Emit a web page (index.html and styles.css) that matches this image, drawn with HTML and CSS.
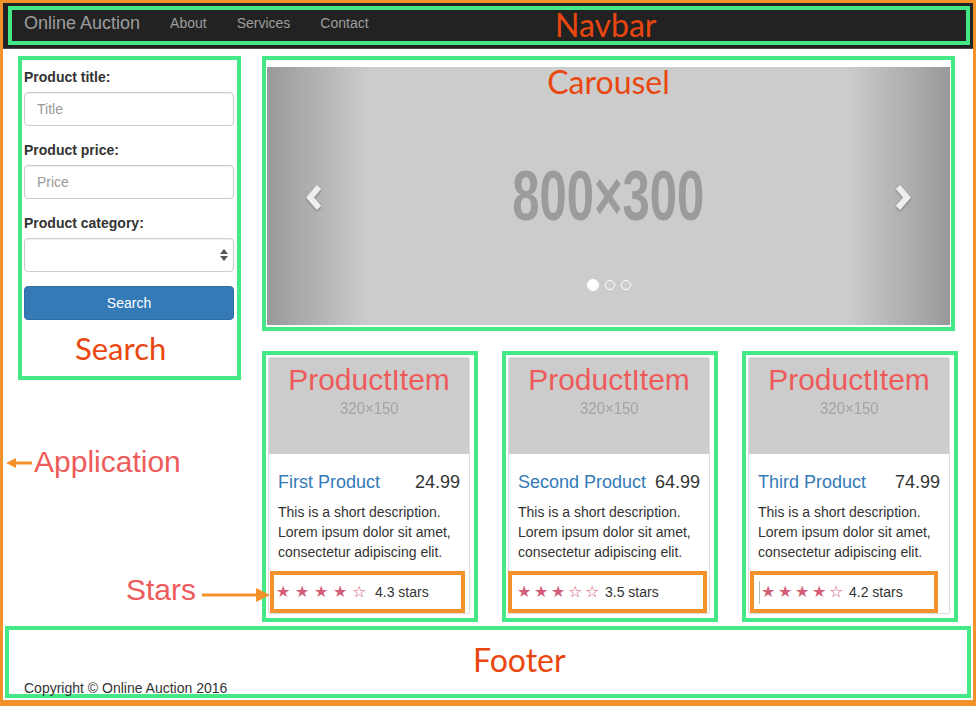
FILE: index.html
```html
<!DOCTYPE html>
<html lang="en">
<head>
<meta charset="utf-8">
<title>Online Auction</title>
<link rel="stylesheet" href="styles.css">
</head>
<body>
<div class="app">
  <nav class="navbar">
    <div class="nav-box">
      <a class="brand">Online Auction</a>
      <a class="nav-link">About</a>
      <a class="nav-link">Services</a>
      <a class="nav-link">Contact</a>
      <span class="tag tag-navbar">Navbar</span>
    </div>
  </nav>

  <main class="main">
    <aside class="search">
      <div class="form-group">
        <label class="field-label">Product title:</label>
        <input class="form-control" type="text" placeholder="Title">
      </div>
      <div class="form-group">
        <label class="field-label">Product price:</label>
        <input class="form-control" type="text" placeholder="Price">
      </div>
      <div class="form-group">
        <label class="field-label">Product category:</label>
        <div class="form-control select">
          <svg class="select-arrows" width="8" height="12" viewBox="0 0 8 12"><polygon points="4,0 8,5 0,5" fill="#555"/><polygon points="0,7 8,7 4,12" fill="#555"/></svg>
        </div>
      </div>
      <button class="btn">Search</button>
      <span class="tag tag-search">Search</span>
    </aside>

    <section class="content">
      <div class="carousel">
        <div class="slide">
          <div class="shade shade-left"></div>
          <div class="shade shade-right"></div>
          <span class="ph-big">800×300</span>
          <svg class="chev chev-left" width="19" height="27" viewBox="0 0 19 27"><polyline points="15,3 6,13.5 15,24" fill="none" stroke="#eeeeee" stroke-width="6"/></svg>
          <svg class="chev chev-right" width="19" height="27" viewBox="0 0 19 27"><polyline points="4,3 13,13.5 4,24" fill="none" stroke="#eeeeee" stroke-width="6"/></svg>
          <div class="indicators">
            <span class="dot dot-active"></span>
            <span class="dot"></span>
            <span class="dot"></span>
          </div>
        </div>
        <span class="tag tag-carousel">Carousel</span>
      </div>

      <div class="products">
        <div class="product">
          <div class="thumb">
            <div class="thumb-img"><span class="ph-sm">320×150</span><span class="item-tag">ProductItem</span></div>
            <div class="caption">
              <div class="title-row"><a class="title">First Product</a><span class="price">24.99</span></div>
              <p class="desc">This is a short description. Lorem ipsum dolor sit amet, consectetur adipiscing elit.</p>
            </div>
            <div class="rating rating-1">
              <span class="stars"><span class="star">★</span><span class="star">★</span><span class="star">★</span><span class="star">★</span><span class="star">☆</span></span>
              <span class="rating-text">4.3 stars</span>
            </div>
          </div>
        </div>
        <div class="product">
          <div class="thumb">
            <div class="thumb-img"><span class="ph-sm">320×150</span><span class="item-tag">ProductItem</span></div>
            <div class="caption">
              <div class="title-row"><a class="title">Second Product</a><span class="price">64.99</span></div>
              <p class="desc">This is a short description. Lorem ipsum dolor sit amet, consectetur adipiscing elit.</p>
            </div>
            <div class="rating rating-2">
              <span class="stars"><span class="star">★</span><span class="star">★</span><span class="star">★</span><span class="star">☆</span><span class="star">☆</span></span>
              <span class="rating-text">3.5 stars</span>
            </div>
          </div>
        </div>
        <div class="product">
          <div class="thumb">
            <div class="thumb-img"><span class="ph-sm">320×150</span><span class="item-tag">ProductItem</span></div>
            <div class="caption">
              <div class="title-row"><a class="title">Third Product</a><span class="price">74.99</span></div>
              <p class="desc">This is a short description. Lorem ipsum dolor sit amet, consectetur adipiscing elit.</p>
            </div>
            <div class="rating rating-3">
              <span class="caret-line"></span>
              <span class="stars"><span class="star">★</span><span class="star">★</span><span class="star">★</span><span class="star">★</span><span class="star">☆</span></span>
              <span class="rating-text">4.2 stars</span>
            </div>
          </div>
        </div>
      </div>
    </section>
  </main>

  <footer class="footer">
    <span class="copyright">Copyright © Online Auction 2016</span>
    <span class="tag tag-footer">Footer</span>
  </footer>

  <svg class="arrow arrow-app" width="26" height="10" viewBox="0 0 26 10"><line x1="8" y1="5" x2="26" y2="5" stroke="#f3922a" stroke-width="3"/><polygon points="0,5 10,0 10,10" fill="#f3922a"/></svg>
  <span class="note note-app">Application</span>
  <span class="note note-stars">Stars</span>
  <svg class="arrow arrow-stars" width="68" height="14" viewBox="0 0 68 14"><line x1="0" y1="7" x2="56" y2="7" stroke="#f3922a" stroke-width="3"/><polygon points="68,7 54,0 54,14" fill="#f3922a"/></svg>
</div>
</body>
</html>
```

FILE: styles.css
```css
body {
  margin: 0;
  font-family: "Liberation Sans", Arial, sans-serif;
  font-size: 14px;
  line-height: 20px;
  color: #333;
  background: #fff;
}

.app {
  position: relative;
  width: 976px;
  height: 706px;
  box-sizing: border-box;
  border: 3px solid #f3922a;
  border-bottom-width: 6px;
  overflow: hidden;
  background: #fff;
}

/* ---------- annotation labels ---------- */
.tag {
  position: absolute;
  font-family: Lato, "Open Sans", sans-serif;
  font-size: 32px;
  line-height: 1;
  color: #e9470f;
  white-space: nowrap;
  z-index: 3;
}

.note {
  position: absolute;
  font-family: "Liberation Sans", Arial, sans-serif;
  font-size: 30px;
  line-height: 1;
  color: #ee5b5b;
  white-space: nowrap;
}

.note-app { left: 31px; top: 444px; }
.note-stars { left: 123px; top: 572px; }

.arrow { position: absolute; }
.arrow-app { left: 3px; top: 455px; }
.arrow-stars { left: 199px; top: 585px; }

/* ---------- navbar ---------- */
.navbar {
  background: #222;
  border-bottom: 1px solid #4a4a4a;
  padding: 3px 3px 3px 5px;
}

.nav-box {
  position: relative;
  box-sizing: border-box;
  height: 39px;
  border: 4px solid #44e887;
  padding: 3px 0 0 12px;
  display: flex;
  align-items: flex-start;
}

.brand {
  font-size: 18px;
  line-height: 20px;
  color: #9d9d9d;
  margin-right: 30px;
}

.nav-link {
  font-size: 14px;
  line-height: 20px;
  color: #9d9d9d;
  margin-right: 30px;
}

.tag-navbar { left: 543px; top: -1px; }

/* ---------- main ---------- */
.main {
  display: flex;
  align-items: flex-start;
  gap: 21px;
  padding: 7px 0 0 15px;
}

/* ---------- search ---------- */
.search {
  position: relative;
  width: 223px;
  height: 324px;
  box-sizing: border-box;
  border: 4px solid #44e887;
  padding: 7px 3px 0 2px;
}

.form-group { margin-bottom: 14px; }

.field-label {
  display: block;
  font-weight: bold;
  margin-bottom: 5px;
}

.form-control {
  display: block;
  width: 100%;
  height: 34px;
  box-sizing: border-box;
  padding: 6px 12px;
  border: 1px solid #ccc;
  border-radius: 4px;
  background: #fff;
  font: inherit;
  color: #555;
  box-shadow: inset 0 1px 1px rgba(0, 0, 0, 0.075);
  outline: none;
}

.form-control::placeholder { color: #999; }

.select {
  display: flex;
  align-items: center;
  justify-content: flex-end;
  padding-right: 5px;
}

.btn {
  display: block;
  width: 100%;
  height: 34px;
  border: 1px solid #2e6da4;
  border-radius: 4px;
  background: #337ab7;
  color: #fff;
  font: inherit;
  padding: 0;
}

.tag-search { left: 53px; top: 273px; font-size: 31px; }

/* ---------- content ---------- */
.content { width: 696px; }

.carousel {
  position: relative;
  width: 693px;
  box-sizing: border-box;
  border: 4px solid #44e887;
  padding: 7px 1px 2px 1px;
}

.slide {
  position: relative;
  height: 258px;
  background: #ccc;
  overflow: hidden;
  display: flex;
  align-items: center;
  justify-content: center;
}

.shade {
  position: absolute;
  top: 0;
  bottom: 0;
  width: 15%;
}

.shade-left {
  left: 0;
  background: linear-gradient(to right, rgba(0, 0, 0, 0.25), rgba(0, 0, 0, 0));
}

.shade-right {
  right: 0;
  background: linear-gradient(to left, rgba(0, 0, 0, 0.25), rgba(0, 0, 0, 0));
}

.ph-big {
  font-size: 70px;
  font-weight: bold;
  line-height: 1;
  color: #9b9b9b;
  transform: scaleX(0.7);
  white-space: nowrap;
}

.chev {
  position: absolute;
  top: 117px;
  filter: drop-shadow(0 1px 1px rgba(0, 0, 0, 0.35));
}

.chev-left { left: 37px; }
.chev-right { right: 37px; }

.indicators {
  position: absolute;
  left: 0;
  right: 0;
  top: 212px;
  height: 12px;
  display: flex;
  align-items: center;
  justify-content: center;
  gap: 6px;
}

.dot {
  width: 10px;
  height: 10px;
  box-sizing: border-box;
  border: 1px solid #fff;
  border-radius: 50%;
}

.dot-active {
  width: 12px;
  height: 12px;
  background: #fff;
}

.tag-carousel { left: 0; right: 0; top: 6px; text-align: center; }

/* ---------- products ---------- */
.products {
  display: grid;
  grid-template-columns: repeat(3, 216px);
  column-gap: 24px;
  margin-top: 20px;
}

.product {
  border: 4px solid #44e887;
  padding: 2px 4px 4px 2px;
}

.thumb {
  border: 1px solid #ddd;
  border-radius: 2px;
}

.thumb-img {
  position: relative;
  height: 96px;
  background: #ccc;
  display: flex;
  align-items: center;
  justify-content: center;
}

.ph-sm {
  font-size: 17px;
  line-height: 1;
  color: #a3a3a3;
  transform: scaleX(0.88);
  margin-top: 4px;
}

.item-tag {
  position: absolute;
  left: 0;
  right: 0;
  top: 7px;
  text-align: center;
  font-size: 30px;
  line-height: 1;
  color: #ee5b5b;
}

.caption { padding: 9px 9px 0; }

.title-row {
  display: flex;
  justify-content: space-between;
  margin-top: 9px;
  font-size: 18px;
  line-height: 20px;
}

.title { color: #337ab7; }
.price { color: #333; }

.desc { margin: 10px 0 0; }

.rating {
  height: 42px;
  box-sizing: border-box;
  margin-top: 9px;
  border: 4px solid #f3922a;
  display: flex;
  align-items: center;
}

.rating-1 { margin-left: 1px; margin-right: 4px; padding-left: 2px; }
.rating-2 { margin-left: -1px; margin-right: 2px; padding-left: 5px; }
.rating-3 { margin-left: 1px; margin-right: 11px; padding-left: 5px; }

.rating-1 .star { margin-right: 6px; }
.rating-1 .rating-text { margin-left: 4px; }

.caret-line {
  width: 1px;
  height: 23px;
  background: #bbb;
  margin-right: 1px;
}

.stars {
  display: flex;
  align-items: center;
  font-family: "DejaVu Sans", sans-serif;
  font-size: 16px;
  line-height: 20px;
  color: #d35e78;
}

.star {
  display: inline-block;
  width: 13px;
  margin-right: 4px;
  text-align: center;
}

.rating-text { margin-left: 3px; }

/* ---------- footer ---------- */
.footer {
  position: relative;
  height: 72px;
  box-sizing: border-box;
  margin: 4px 2px 0;
  border: 4px solid #44e887;
  padding: 50px 0 0 15px;
  line-height: 16px;
}

.tag-footer { left: 464px; top: 14px; }
```
